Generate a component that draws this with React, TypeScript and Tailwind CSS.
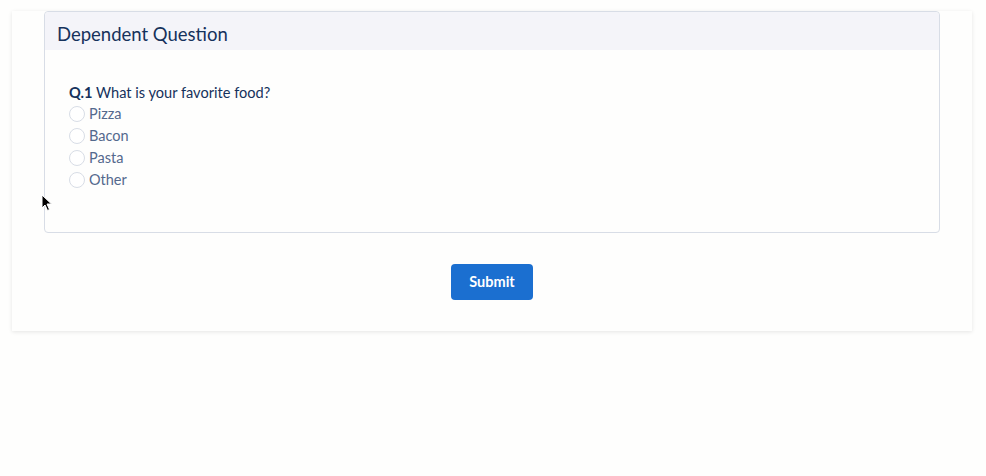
import React from "react";

const options = ["Pizza", "Bacon", "Pasta", "Other"];

const App: React.FC = () => {
  return (
    <div className="relative min-h-[476px] w-[986px] bg-[#fefefd] pt-[11px] font-['Lato',sans-serif]">
      <div className="ml-[12px] w-[960px] bg-[#fefefd] pb-[31px] shadow-[0_1px_4px_rgba(0,0,0,0.10)]">
        <div className="ml-[32px] w-[896px] rounded-[4px] border border-[#d8dde6] bg-[#fefefd]">
          <div className="flex h-[38px] items-center rounded-t-[4px] bg-[#f4f4f9] px-[12px] pt-[8px]">
            <h1 className="text-[18.5px] text-[#16325c]">Dependent Question</h1>
          </div>
          <div className="px-[24px] pb-[41px] pt-[33px]">
            <p className="text-[14.6px] leading-[20px] text-[#16325c]">
              <span className="font-bold">Q.1</span> What is your favorite food?
            </p>
            <div className="flex flex-col">
              {options.map((opt) => (
                <label key={opt} className="flex h-[22px] items-center gap-[4px]">
                  <span className="h-[16px] w-[16px] rounded-full border border-[#d8dde6] bg-white" />
                  <span className="text-[14.5px] text-[#54698d]">{opt}</span>
                </label>
              ))}
            </div>
          </div>
        </div>
        <div className="mt-[31px] flex justify-center">
          <button className="h-[36px] w-[82px] rounded-[4px] bg-[#1b6fd0] text-[14.5px] font-bold text-white">
            Submit
          </button>
        </div>
      </div>
      <svg
        className="absolute left-[41px] top-[194px]"
        width="12"
        height="18"
        viewBox="0 0 12 18"
      >
        <path d="M1 1 L1 14 L4 11 L6.5 16.5 L8.5 15.5 L6 10 L10.5 10 Z" fill="#000" stroke="#fff" strokeWidth="1" />
      </svg>
    </div>
  );
};

export default App;
